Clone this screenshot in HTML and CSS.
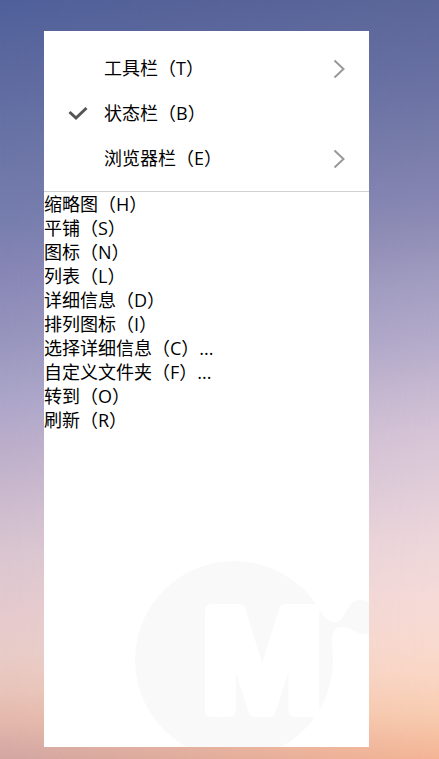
FILE: index.html
```html
<!DOCTYPE html>
<html lang="zh-CN">
<head>
<meta charset="utf-8">
<meta name="viewport" content="width=device-width, initial-scale=1">
<title>查看</title>
<link rel="stylesheet" href="styles.css">
</head>
<body>
<div class="desktop">
  <main class="panel">
    <div class="bars">
      <button class="bar" type="button">
        <span class="label">工具栏（T）</span>
        <svg class="chevron" viewBox="0 0 12 20" aria-hidden="true"><path d="M1.500 1.500 10.500 10 1.500 18.500"/></svg>
      </button>
      <label class="bar">
        <input class="tick-input" type="checkbox" checked>
        <svg class="tick" viewBox="0 0 20 16" aria-hidden="true"><path d="M1.500 6 8 12 18.500 2"/></svg>
        <span class="label">状态栏（B）</span>
      </label>
      <button class="bar" type="button">
        <span class="label">浏览器栏（E）</span>
        <svg class="chevron" viewBox="0 0 12 20" aria-hidden="true"><path d="M1.500 1.500 10.500 10 1.500 18.500"/></svg>
      </button>
    </div>
    <div class="commands">
      <button class="command" type="button">缩略图（H）</button>
      <button class="command" type="button">平铺（S）</button>
      <button class="command" type="button">图标（N）</button>
      <button class="command" type="button">列表（L）</button>
      <button class="command" type="button">详细信息（D）</button>
      <button class="command" type="button">排列图标（I）</button>
      <button class="command" type="button">选择详细信息（C）...</button>
      <button class="command" type="button">自定义文件夹（F）...</button>
      <button class="command" type="button">转到（O）</button>
      <button class="command" type="button">刷新（R）</button>
    </div>
    <svg class="watermark" viewBox="0 0 234 187" aria-hidden="true">
      <g class="watermark-shape">
        <circle cx="99" cy="100" r="99"/>
        <path d="M165 26 C184 42 186 62 200 62 C213 62 209 40 226 40 Q231 40 234 42 V73 Q228 76 219 71 C212 67 209 66 204 67 C196 69 197 78 197 100 L170 110 Z"/>
      </g>
      <text class="watermark-letter" x="127" y="151" text-anchor="middle">M</text>
    </svg>
  </main>
</div>
</body>
</html>
```

FILE: styles.css
```css
* {
  box-sizing: border-box;
}

body {
  margin: 0;
  color: #000;
  font: 18px/24px "Open Sans", "Noto Sans CJK SC", sans-serif;
}

.desktop {
  position: relative;
  z-index: 0;
  display: flex;
  min-height: 100vh;
  padding: 31px 70px 12px 44px;
  background: linear-gradient(#50609a 0, #6a74a6 19%, #767eae 29%, #8886b6 36%, #9896be 45%, #aca6ca 53%, #bcaeca 59%, #cebccf 67%, #dac6d0 73%, #e5cace 81%, #e8ccc8 86%, #e8c4ba 91%, #e4b8ac 95%, #d2a6a2 100%);
}

.desktop::before {
  content: "";
  position: absolute;
  z-index: -1;
  inset: 0;
  background: linear-gradient(#5c6698 0, #6870a2 10%, #787ca9 19%, #8685b2 26%, #9491b8 32%, #a49fc2 38%, #b4abca 45%, #c6b8d0 51%, #d6c4d6 57%, #e2ced9 65%, #ecd6da 71%, #f4dad8 78%, #f8dad0 84%, #fad6c4 89%, #f8ccb0 94%, #f4b494 100%);
  mask-image: linear-gradient(to right, transparent, #000);
}

.panel {
  display: flex;
  flex: 1;
  flex-direction: column;
  min-width: 0;
  background: #fff;
}

.bars {
  padding: 15px 0 10px;
  border-bottom: 1px solid #d0d0d0;
}

button {
  margin: 0;
  padding: 0;
  border: 0;
  background: none;
  color: inherit;
  font: inherit;
  text-align: left;
}

.bar {
  display: grid;
  grid-template-columns: 36px 1fr 12px;
  align-items: center;
  width: 100%;
  height: 45px;
  padding: 0 24px;
}

.label {
  grid-column: 2;
  padding-bottom: 2px;
}

.tick-input {
  position: absolute;
  opacity: 0;
}

.tick,
.chevron {
  fill: none;
}

.tick {
  grid-column: 1;
  width: 20px;
  height: 16px;
  stroke: #555;
  stroke-width: 3;
}

.chevron {
  grid-column: 3;
  width: 12px;
  height: 20px;
  stroke: #999;
  stroke-width: 2;
}

.commands {
  display: flex;
  flex-direction: column;
}

.watermark {
  width: 234px;
  max-width: 100%;
  margin-top: auto;
  margin-left: auto;
}

.watermark-shape {
  fill: #f9f9f9;
}

.watermark-letter {
  fill: #fff;
  stroke: #fff;
  stroke-width: 12;
  stroke-linejoin: round;
  font: bold 146px "Liberation Sans", sans-serif;
}
```
